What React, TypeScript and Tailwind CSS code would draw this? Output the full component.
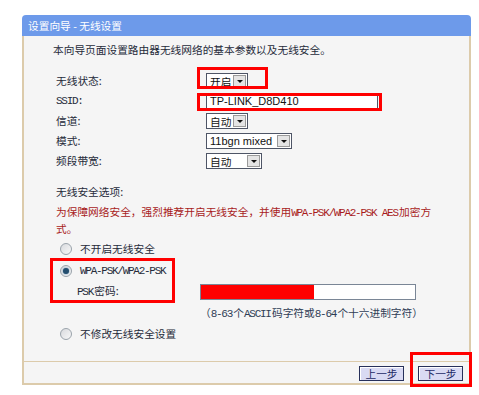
import React from "react";

const cjk = "font-['Noto_Sans_CJK_SC',sans-serif]";

function Mono({ children }: { children: React.ReactNode }) {
  return <span className="mr-[1.3px] font-['Liberation_Mono',monospace] text-[11px] tracking-[-1.27px]">{children}</span>;
}

function Arrow() {
  return (
    <div className="flex h-full w-[13px] items-center justify-center border border-[#9a9a9a] bg-[#e4e4e4]">
      <div className="h-0 w-0 border-x-[3px] border-t-[3px] border-x-transparent border-t-[#111]" />
    </div>
  );
}

function Select({ text, width, sans }: { text: string; width: string; sans?: boolean }) {
  return (
    <div className={`flex h-[16px] items-stretch border border-[#4e5566] bg-white p-px ${width}`}>
      <span
        className={`flex-1 pl-[2px] leading-[13px] text-[#111] ${
          sans ? "font-['Liberation_Sans',sans-serif] text-[11px]" : "text-[10.7px]"
        }`}
      >
        {text}
      </span>
      <Arrow />
    </div>
  );
}

function Radio({ checked }: { checked?: boolean }) {
  return (
    <div className="flex h-[12px] w-[12px] items-center justify-center rounded-full border border-[#9aa3ab] bg-gradient-to-br from-[#d8dade] to-[#f8f8f8]">
      {checked && <div className="h-[6px] w-[6px] rounded-full bg-[#244e6e] shadow-[0_0_2px_#5a8ab0]" />}
    </div>
  );
}

const rows: { label: React.ReactNode; control: React.ReactNode }[] = [
  { label: "无线状态:", control: <Select text="开启" width="w-[42px]" /> },
  {
    label: <Mono>SSID:</Mono>,
    control: (
      <div className="flex h-[15px] w-[172px] items-center border border-[#4e5566] bg-white pl-[3px] font-['Liberation_Sans',sans-serif] text-[11px] text-[#111]">
        TP-LINK_D8D410
      </div>
    ),
  },
  { label: "信道:", control: <Select text="自动" width="w-[42px]" /> },
  { label: "模式:", control: <Select text="11bgn mixed" width="w-[86px]" sans /> },
  { label: "频段带宽:", control: <Select text="自动" width="w-[56px]" /> },
];

export default function App() {
  return (
    <div className={`relative h-[395px] w-[479px] bg-white pl-[22px] pt-[15px] text-[10.7px] text-[#262b3a] ${cjk}`}>
      <div className="flex w-[449px] flex-col">
        <div className="h-[21px] rounded-t-[4px] bg-[#6d9aea] pl-[6px] leading-[21px] text-white">设置向导 - 无线设置</div>
        <div className="flex h-[349px] flex-col border-x-2 border-b-2 border-[#dccbab] bg-[#f5f5f5]">
          <div className="flex flex-1 flex-col pt-[6px]">
            <p className="pl-[29px] leading-[16px]">本向导页面设置路由器无线网络的基本参数以及无线安全。</p>

            <div className="mt-[13px] grid grid-cols-[150px_1fr] pl-[32px]">
              {rows.map((r, i) => (
                <React.Fragment key={i}>
                  <div className="flex h-[20px] items-center">{r.label}</div>
                  <div className="flex h-[20px] items-center">{r.control}</div>
                </React.Fragment>
              ))}
            </div>

            <p className="mt-[13px] pl-[32px] leading-[16px]">无线安全选项:</p>
            <p className="mt-[4px] pl-[32px] pr-[30px] leading-[16px] text-[#a81c1c]">
              为保障网络安全，强烈推荐开启无线安全，并使用<Mono>WPA-PSK/WPA2-PSK AES</Mono>加密方式。
            </p>

            <div className="mt-[4px] flex h-[16px] items-center gap-[8px] pl-[36px]">
              <Radio />
              <span>不开启无线安全</span>
            </div>
            <div className="mt-[6px] flex h-[16px] items-center gap-[8px] pl-[36px]">
              <Radio checked />
              <Mono>WPA-PSK/WPA2-PSK</Mono>
            </div>
            <div className="mt-[4px] flex h-[18px] items-center pl-[53px]">
              <span className="w-[123px]">
                <Mono>PSK</Mono>密码:
              </span>
              <div className="flex h-[16px] w-[216px] border border-[#7a8696] bg-white">
                <div className="h-full w-[113px] bg-[#ff0000]" />
              </div>
            </div>
            <p className="mt-[4px] pl-[176px] leading-[16px] text-[#2f3d55]">
              （<Mono>8-63</Mono>个<Mono>ASCII</Mono>码字符或<Mono>8-64</Mono>个十六进制字符）
            </p>
            <div className="mt-[4px] flex h-[16px] items-center gap-[8px] pl-[36px]">
              <Radio />
              <span>不修改无线安全设置</span>
            </div>
          </div>

          <div className="flex h-[22px] items-start justify-end gap-[14px] border-t border-[#dccbab] pr-[6px] pt-[4px]">
            {["上一步", "下一步"].map((t) => (
              <button
                key={t}
                className="flex h-[15px] w-[45px] items-center justify-center border border-[#27305a] bg-[#d9daf3] leading-[13px] text-[#1d2a66] shadow-[inset_1px_1px_0_#ffffff]"
              >
                {t}
              </button>
            ))}
          </div>
        </div>
      </div>

      <div className="absolute left-[197px] top-[67px] h-[22px] w-[71px] border-[3px] border-[#f00]" />
      <div className="absolute left-[197px] top-[93px] h-[18px] w-[185px] border-[3px] border-[#f00]" />
      <div className="absolute left-[50px] top-[258px] h-[45px] w-[125px] border-[3px] border-[#f00]" />
      <div className="absolute left-[410px] top-[352px] h-[35px] w-[62px] border-[3px] border-[#f00]" />
    </div>
  );
}
